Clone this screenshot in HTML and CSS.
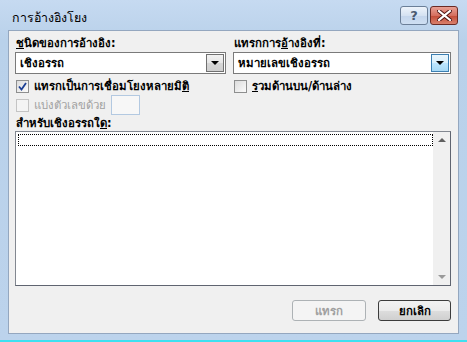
FILE: index.html
```html
<!DOCTYPE html>
<html lang="th">
<head>
<meta charset="utf-8">
<link rel="stylesheet" href="styles.css">
</head>
<body>
<div class="window">
  <div class="titlebar">
    <span class="title">การอ้างอิงโยง</span>
    <div class="caption-btns">
      <span class="cbtn help">?</span>
      <span class="cbtn close"><svg width="15" height="11" viewBox="0 0 15 11"><path d="M2 1 L13 10 M13 1 L2 10" stroke="#4a1010" stroke-width="4" stroke-linecap="square"/><path d="M2 1 L13 10 M13 1 L2 10" stroke="#fff" stroke-width="2.2" stroke-linecap="square"/></svg></span>
    </div>
  </div>
  <div class="client">
    <div class="cols">
      <div class="col">
        <div class="label"><u>ช</u>นิดของการอ้างอิง:</div>
        <div class="combo"><span class="combo-text">เชิงอรรถ</span><span class="drop"><span class="tri"></span></span></div>
      </div>
      <div class="col">
        <div class="label">แทรกการ<u>อ้</u>างอิงที่:</div>
        <div class="combo focus"><span class="combo-text">หมายเลขเชิงอรรถ</span><span class="drop hot"><span class="tri"></span></span></div>
      </div>
    </div>
    <div class="cols checks">
      <label class="check"><span class="box checked"><svg width="9" height="9" viewBox="0 0 9 9"><path d="M1 4.5 L3.5 7.5 L8 1" fill="none" stroke="#1c3f94" stroke-width="1.8"/></svg></span><span>แทรกเป็นการเชื่อมโยงหลายมิ<u>ติ</u></span></label>
      <label class="check"><span class="box"></span><span><u>ร</u>วมด้านบน/ด้านล่าง</span></label>
    </div>
    <div class="sep-row">
      <label class="check disabled"><span class="box"></span><span>แบ่งตัวเลขด้วย</span></label>
      <span class="smallbox"></span>
    </div>
    <div class="label list-label">สำหรับเชิงอรรถใ<u>ด</u>:</div>
    <div class="listbox">
      <div class="list-items"><div class="item"></div></div>
      <div class="scrollbar"><span class="up"></span><span class="down"></span></div>
    </div>
    <div class="buttons">
      <span class="btn disabled">แทรก</span>
      <span class="btn default">ยกเลิก</span>
    </div>
  </div>
</div>
</body>
</html>
```
FILE: styles.css
```css
html, body { margin: 0; padding: 0; }
body { width: 467px; height: 342px; overflow: hidden; font-family: Tahoma, "DejaVu Sans", "Noto Sans", sans-serif; font-size: 11.4px; color: #000; }
.window { box-sizing: border-box; width: 467px; height: 342px; background: linear-gradient(#c6daf1, #b9d1ea 40px, #bcd3ec); border-bottom: 2px solid #3ee0f0; display: flex; flex-direction: column; padding: 0 8px 6px 8px; }
.titlebar { height: 30px; display: flex; align-items: flex-start; justify-content: space-between; }
.title { margin-top: 8px; margin-left: 4px; font-size: 12.4px; color: #000; }
.caption-btns { display: flex; gap: 2px; margin-top: 6px; margin-right: 1px; }
.cbtn { box-sizing: border-box; height: 19px; border: 1px solid #6b7f98; border-radius: 3px; display: flex; align-items: center; justify-content: center; }
.help { width: 28px; background: linear-gradient(#eef4fb, #d5e2f2 50%, #c3d5ec 51%, #cfdff2); color: #4a5a70; font-weight: bold; font-size: 13px; font-family: "DejaVu Sans", sans-serif; }
.close { width: 28px; background: linear-gradient(#e8a094, #d56f5f 50%, #c24a36 51%, #d9806c); border-color: #6a2a24; }
.client { flex: 1; background: #f0f0f0; border: 1px solid #94a7bf; padding: 5px 7px 0 6px; display: flex; flex-direction: column; }
.cols { display: grid; grid-template-columns: 211px 218px; column-gap: 7px; }
.label { height: 15px; line-height: 15px; font-weight: bold; }
.col .label { margin-left: 1px; margin-bottom: 1px; }
.combo { box-sizing: border-box; height: 22px; background: #fff; border: 1px solid #7a7a7a; display: flex; align-items: center; }
.combo-text { flex: 1; padding-left: 4px; font-weight: bold; }
.drop { box-sizing: border-box; width: 18px; height: 18px; margin-right: 1px; border: 1px solid #707070; background: linear-gradient(#f2f2f2, #e6e6e6 50%, #d6d6d6 51%, #cfcfcf); display: flex; align-items: center; justify-content: center; }
.drop.hot { border-color: #3c7fb1; background: linear-gradient(#eaf6fd, #d9f0fc 50%, #bee6fd 51%, #a7d9f5); }
.tri { width: 0; height: 0; border-left: 4px solid transparent; border-right: 4px solid transparent; border-top: 4px solid #000; }
.checks { margin-top: 5px; height: 14px; }
.check { display: flex; align-items: center; gap: 5px; height: 14px; font-weight: bold; margin-left: 1px; }
.box { box-sizing: border-box; width: 13px; height: 13px; border: 1px solid #8e8f8f; background: linear-gradient(135deg, #dcdcdc, #fbfbfb); display: flex; align-items: center; justify-content: center; }
.disabled { color: #a0a0a0; }
.check.disabled .box { border-color: #c4c4c4; background: #f4f4f4; }
.sep-row { display: flex; align-items: center; margin-top: 2px; height: 20px; }
.sep-row .check { font-weight: normal; }
.smallbox { box-sizing: border-box; width: 29px; height: 20px; margin-left: 5px; border: 1px solid #b3c9e1; background: #f7f7f7; }
.list-label { margin-top: 1px; margin-left: 1px; }
.listbox { box-sizing: border-box; height: 155px; margin-top: 0; border: 1px solid #828790; border-right-color: #5f6470; border-bottom-color: #5f6470; background: #fff; display: flex; }
.list-items { flex: 1; padding: 2px 0 0 2px; }
.item { height: 10px; border: 1px dotted #000; }
.scrollbar { width: 17px; background: #f0f0f0; display: flex; flex-direction: column; justify-content: space-between; align-items: center; padding: 6px 0; box-sizing: border-box; }
.up { width: 0; height: 0; border-left: 4px solid transparent; border-right: 4px solid transparent; border-bottom: 4px solid #606060; }
.down { width: 0; height: 0; border-left: 4px solid transparent; border-right: 4px solid transparent; border-top: 4px solid #9a9a9a; }
.buttons { display: flex; justify-content: flex-end; gap: 12px; margin-top: 14px; margin-right: 0; }
.btn { box-sizing: border-box; height: 21px; display: flex; align-items: center; justify-content: center; border-radius: 3px; font-weight: bold; }
.btn.disabled { width: 74px; border: 1px solid #adb2b5; background: #f4f4f4; color: #a0a0a0; }
.btn.default { width: 73px; border: 1px solid #3c3c3c; background: linear-gradient(#f2f2f2, #ebebeb 50%, #dddddd 51%, #cfcfcf); color: #000; }
```
